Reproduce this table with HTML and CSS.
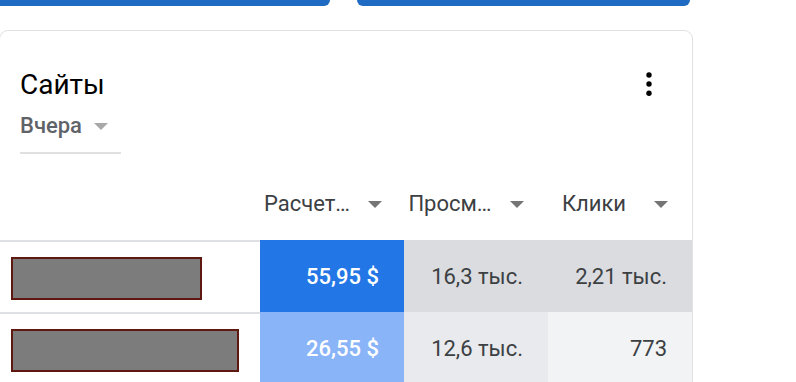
FILE: index.html
```html
<!DOCTYPE html>
<html lang="ru">
<head>
<meta charset="utf-8">
<title>Сайты</title>
<link rel="stylesheet" href="styles.css">
</head>
<body>
  <div class="top-cards">
    <div class="top-card top-card--left"></div>
    <div class="top-card top-card--right"></div>
  </div>

  <section class="card">
    <div class="card-head">
      <div class="title-row">
        <h2 class="title">Сайты</h2>
        <button class="menu-btn" aria-label="Меню">
          <svg width="8" height="26" viewBox="0 0 8 26" aria-hidden="true">
            <circle cx="4" cy="4" r="2.7"/>
            <circle cx="4" cy="13" r="2.7"/>
            <circle cx="4" cy="22.3" r="2.7"/>
          </svg>
        </button>
      </div>
      <div class="date-select">
        <span class="date-label">Вчера</span>
        <span class="caret caret--light"></span>
      </div>
    </div>

    <div class="table">
      <div class="thead">
        <div class="th th--name"></div>
        <div class="th" title="Расчетный доход"><span class="th-label">Расчет…</span><span class="caret"></span></div>
        <div class="th" title="Просмотры страниц"><span class="th-label">Просм…</span><span class="caret"></span></div>
        <div class="th" title="Клики"><span class="th-label">Клики</span><span class="caret"></span></div>
      </div>

      <div class="tr">
        <div class="td td--name"><span class="redacted redacted--a"></span></div>
        <div class="td td--blue-strong">55,95 $</div>
        <div class="td td--grey-strong">16,3 тыс.</div>
        <div class="td td--grey-strong">2,21 тыс.</div>
      </div>

      <div class="tr">
        <div class="td td--name"><span class="redacted redacted--b"></span></div>
        <div class="td td--blue-light">26,55 $</div>
        <div class="td td--grey-mid">12,6 тыс.</div>
        <div class="td td--grey-light">773</div>
      </div>
    </div>
  </section>
</body>
</html>
```

FILE: styles.css
```css
* {
  box-sizing: border-box;
}

html, body {
  margin: 0;
  padding: 0;
  background: #ffffff;
  overflow: hidden;
}

body {
  font-family: Roboto, "Noto Sans", "Liberation Sans", sans-serif;
  color: #3c4043;
  width: 796px;
  height: 382px;
}

.top-cards {
  display: flex;
  gap: 27px;
  height: 6px;
}

.top-card {
  height: 6px;
  background: #1f6bc4;
  border-radius: 0 0 9px 9px;
}

.top-card--left {
  width: 340px;
  margin-left: -10px;
}

.top-card--right {
  width: 333px;
}

.card {
  margin-top: 24px;
  margin-left: -1px;
  width: 694px;
  border: 1px solid #dfe1e5;
  border-radius: 9px;
  height: 372px;
  overflow: hidden;
}

.card-head {
  padding: 38px 0 0 20px;
}

.title-row {
  display: flex;
  align-items: center;
  justify-content: space-between;
  padding-right: 39px;
}

.title {
  margin: 0;
  font-size: 28px;
  line-height: 32px;
  font-weight: 400;
  color: #000000;
}

.menu-btn {
  border: 0;
  background: none;
  padding: 0;
  display: flex;
  margin-top: -2px;
}

.menu-btn svg {
  fill: #000000;
}

.date-select {
  display: flex;
  align-items: center;
  gap: 12px;
  width: 101px;
  margin-top: 12px;
  padding-bottom: 13px;
  border-bottom: 2px solid #e0e0e0;
}

.date-label {
  font-size: 22px;
  line-height: 26px;
  font-weight: 500;
  color: #5f6368;
}

.caret {
  flex: none;
  width: 0;
  height: 0;
  border-left: 7px solid transparent;
  border-right: 7px solid transparent;
  border-top: 7px solid #757575;
}

.caret--light {
  border-top-color: #a8a8a8;
}

.thead,
.tr {
  display: grid;
  grid-template-columns: 260px 144px 144px 144px;
}

.thead {
  padding-top: 37px;
  padding-bottom: 23px;
}

.th {
  display: flex;
  align-items: center;
  gap: 18px;
  padding: 0 24px 0 4px;
  height: 26px;
}

.th-label {
  flex: 1;
  font-size: 22px;
  line-height: 26px;
  color: #3c4043;
  text-align: center;
  white-space: nowrap;
}

.tr {
  height: 72px;
}

.td {
  display: flex;
  align-items: center;
  justify-content: flex-end;
  padding-right: 25px;
  font-size: 22px;
  color: #3c4043;
}

.td--name {
  justify-content: flex-start;
  align-items: flex-start;
  padding: 15px 0 0 11px;
  border-top: 2px solid #dfe0e4;
}

.redacted {
  display: block;
  height: 43px;
  background: #7c7c7c;
  border: 2px solid #5f1810;
}

.redacted--a {
  width: 191px;
}

.redacted--b {
  width: 228px;
}

.td--blue-strong {
  background: #2376e5;
  color: #ffffff;
  font-weight: 500;
}

.td--blue-light {
  background: #8ab4f8;
  color: #ffffff;
  font-weight: 500;
}

.td--grey-strong {
  background: #dadce0;
}

.td--grey-mid {
  background: #e8eaed;
}

.td--grey-light {
  background: #f1f3f4;
}
```
